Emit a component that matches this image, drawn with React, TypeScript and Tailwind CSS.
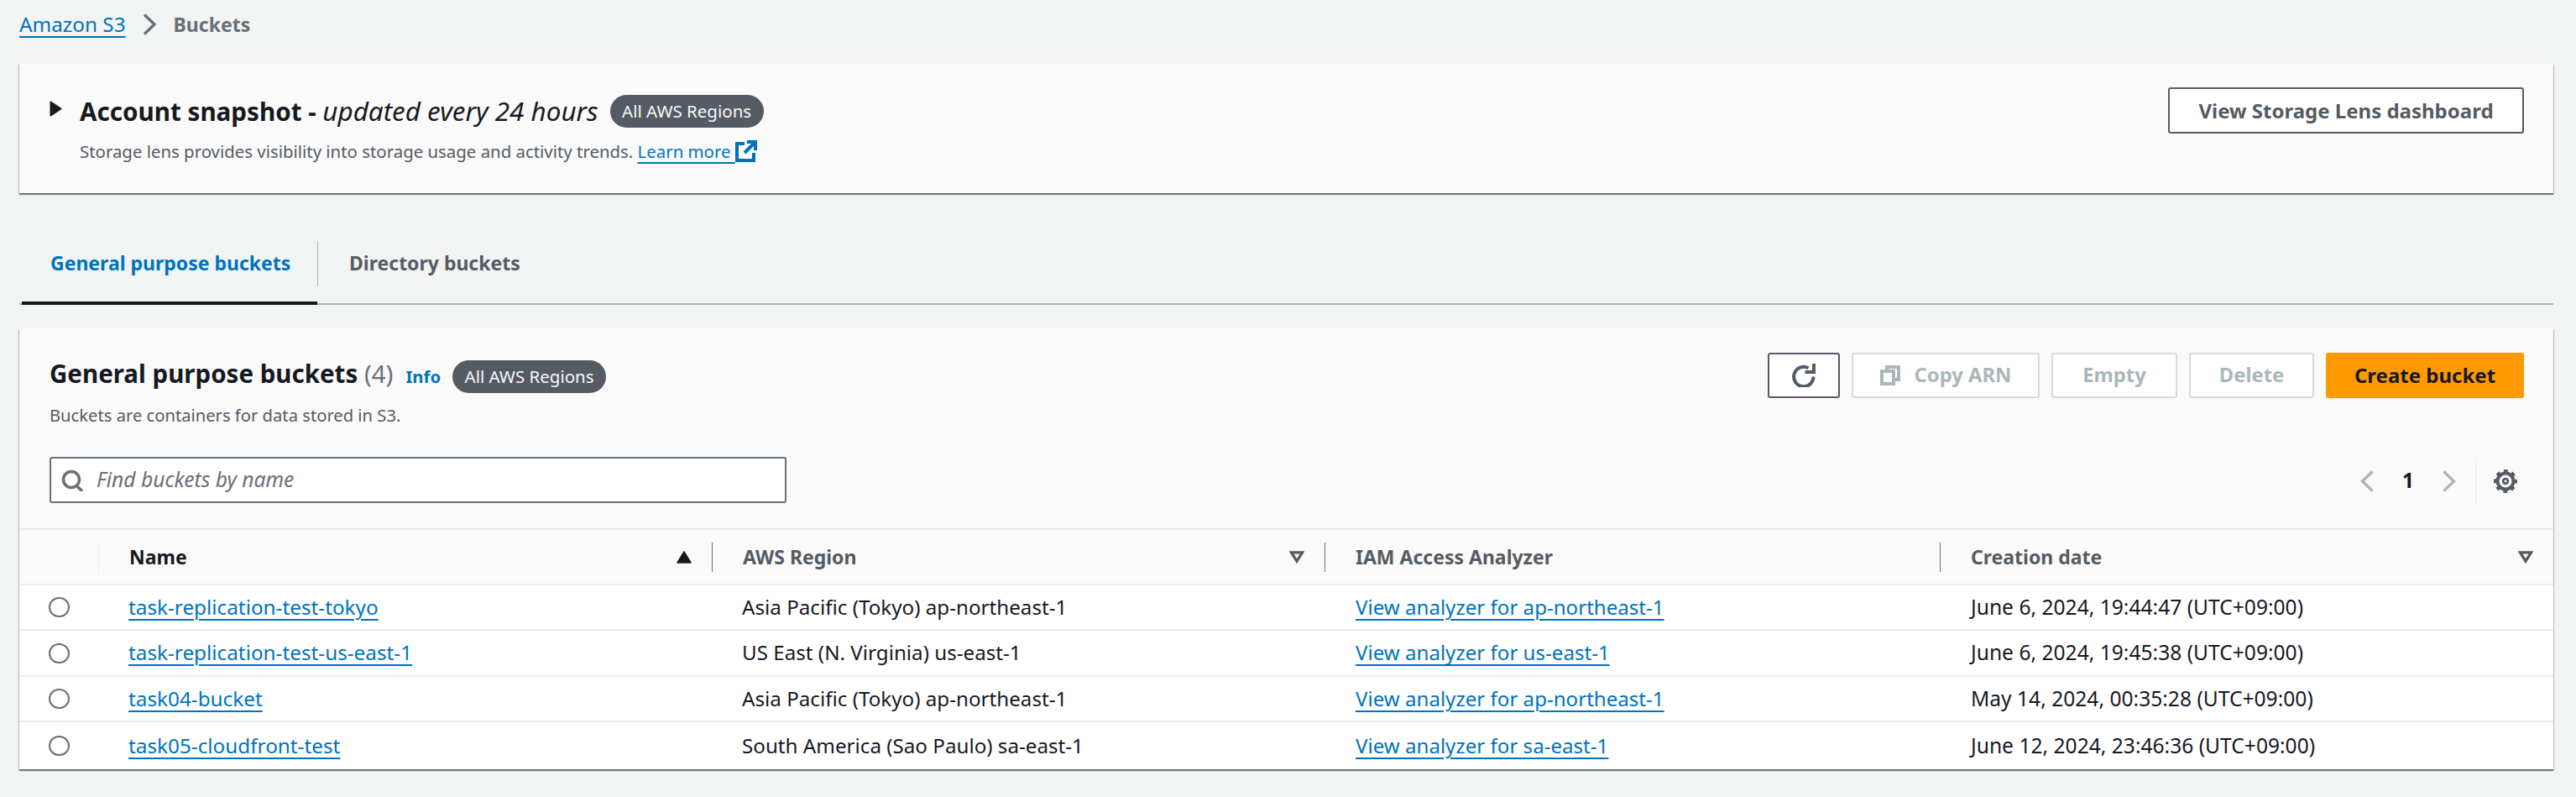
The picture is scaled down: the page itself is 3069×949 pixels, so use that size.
const rows = [
  { name: "task-replication-test-tokyo", region: "Asia Pacific (Tokyo) ap-northeast-1", analyzer: "View analyzer for ap-northeast-1", date: "June 6, 2024, 19:44:47 (UTC+09:00)", h: "h-[54px]" },
  { name: "task-replication-test-us-east-1", region: "US East (N. Virginia) us-east-1", analyzer: "View analyzer for us-east-1", date: "June 6, 2024, 19:45:38 (UTC+09:00)", h: "h-[55px]" },
  { name: "task04-bucket", region: "Asia Pacific (Tokyo) ap-northeast-1", analyzer: "View analyzer for ap-northeast-1", date: "May 14, 2024, 00:35:28 (UTC+09:00)", h: "h-[54px]" },
  { name: "task05-cloudfront-test", region: "South America (Sao Paulo) sa-east-1", analyzer: "View analyzer for sa-east-1", date: "June 12, 2024, 23:46:36 (UTC+09:00)", h: "h-[56px]" },
]

const cardShadow = "shadow-[0_2px_1px_0_rgba(0,28,36,0.45),1px_1px_1px_0_rgba(0,28,36,0.2),-1px_1px_1px_0_rgba(0,28,36,0.2)]"
const linkClass = "text-[#0073bb] underline decoration-2 underline-offset-[5px]"

function Chevron({ dir, className }: { dir: "left" | "right"; className: string }) {
  return (
    <svg viewBox="0 0 16 26" fill="none" stroke="currentColor" strokeWidth="3.4" className={className}>
      <path d={dir === "right" ? "M2 1.500 14 13 2 24.500" : "M14 1.500 2 13 14 24.500"} />
    </svg>
  )
}

function Badge() {
  return (
    <span className="inline-flex h-[39px] w-[183px] items-center justify-center rounded-[20px] bg-[#545b64] text-[20.5px] text-[#fafafa]">
      All AWS Regions
    </span>
  )
}

function Caret({ up, className }: { up?: boolean; className: string }) {
  if (up) {
    return (
      <svg viewBox="0 0 18 15" className={className}>
        <path d="M9 1 17 14H1Z" fill="#16191f" stroke="#16191f" strokeWidth="1.500" strokeLinejoin="round" />
      </svg>
    )
  }
  return (
    <svg viewBox="0 0 18 16" fill="none" stroke="#545b64" strokeWidth="3.500" className={className}>
      <path d="M2 2h14L9 13Z" />
    </svg>
  )
}

function HeaderCell({ label, active, up, sortable = true }: { label: string; active?: boolean; up?: boolean; sortable?: boolean }) {
  return (
    <div className="flex h-full w-full items-center justify-between pl-[36px] pr-[24px]">
      <span className={`text-[23px] font-bold ${active ? "text-[#16191f]" : "text-[#545b64]"}`}>{label}</span>
      {sortable && <Caret up={up} className="h-[15px] w-[18px]" />}
    </div>
  )
}

function Divider({ children }: { children: React.ReactNode }) {
  return <div className="flex h-[35px] items-center border-l border-[#687078]">{children}</div>
}

function ToolButton({ children, className }: { children: React.ReactNode; className: string }) {
  return (
    <button className={`flex h-[54px] items-center justify-center rounded-[3px] border-2 border-[#d5dbdb] bg-white text-[23.8px] font-bold text-[#aab7b8] ${className}`}>
      {children}
    </button>
  )
}

export default function App() {
  return (
    <div className="min-h-[949px] bg-[#f2f3f3] px-[23px] font-['Noto_Sans',sans-serif] text-[24.3px] text-[#16191f]">
      <nav className="flex h-[76px] items-start pt-[11px]">
        <a className={linkClass}>Amazon S3</a>
        <Chevron dir="right" className="ml-[20px] mt-[5px] h-[26px] w-[16px] text-[#687078]" />
        <span className="ml-[21px] text-[23px] font-bold leading-[36px] text-[#687078]">Buckets</span>
      </nav>

      <section className={`flex h-[154px] w-[3019px] items-start justify-between bg-[#fafafa] pl-[36px] pr-[35px] pt-[28px] ${cardShadow}`}>
        <div>
          <div className="flex h-[56px] items-center">
            <svg viewBox="0 0 15 19" className="h-[19px] w-[15px] -translate-y-[3px]">
              <path d="M1.500 1.500 13.500 9.500 1.500 17.500Z" fill="#16191f" stroke="#16191f" strokeWidth="2" strokeLinejoin="round" />
            </svg>
            <h2 className="ml-[21px] text-[29.6px] font-bold">Account snapshot - <em className="text-[31.4px] font-normal">updated every 24 hours</em></h2>
            <span className="ml-[14px]"><Badge /></span>
          </div>
          <p className="ml-[36px] mt-[5px] text-[20.4px] text-[#545b64]">
            Storage lens provides visibility into storage usage and activity trends.{" "}
            <a className={`${linkClass} inline-flex`}>
              <span>Learn more&nbsp;</span>
            </a>
            <svg viewBox="0 0 26 26" fill="none" stroke="#0073bb" strokeWidth="4" className="inline h-[26px] w-[26px] align-[-5px]">
              <path d="M11 4H2v20h20v-9M14 2h10v10M24 2 11 15" />
            </svg>
          </p>
        </div>
        <button className="h-[55px] w-[424px] rounded-[3px] border-2 border-[#545b64] bg-white text-[24px] font-bold text-[#545b64]">
          View Storage Lens dashboard
        </button>
      </section>

      <div className="mt-[57px] flex h-[76px] w-[3019px] items-start border-b-2 border-[#aab7b8]">
        <div className="ml-[3px] flex h-[76px] w-[352px] items-start border-b-[4px] border-[#16191f] pl-[34px] pt-[9px] text-[23px] font-bold text-[#0073bb]">
          General purpose buckets
        </div>
        <div className="h-[54px] border-l border-[#aab7b8] pl-[37px] pt-[9px] text-[23px] font-bold text-[#545b64]">
          Directory buckets
        </div>
      </div>

      <section className={`mt-[28px] w-[3019px] bg-[#fafafa] ${cardShadow}`}>
        <div className="flex h-[238px] justify-between pl-[36px] pr-[35px] pt-[29px]">
          <div>
            <div className="flex h-[50px] items-center">
              <h1 className="text-[29.5px] font-bold">General purpose buckets <span className="font-normal text-[#687078]">(4)</span></h1>
              <a className="ml-[15px] translate-y-[3px] text-[20.3px] font-bold text-[#0073bb]">Info</a>
              <span className="ml-[14px] translate-y-[3px]"><Badge /></span>
            </div>
            <p className="mt-[9px] text-[20.2px] text-[#545b64]">Buckets are containers for data stored in S3.</p>
            <div className="mt-[35px] flex h-[55px] w-[878px] items-center rounded-[3px] border-2 border-[#687078] bg-white pl-[12px]">
              <svg viewBox="0 0 26 26" fill="none" stroke="#687078" strokeWidth="3.500" className="h-[26px] w-[26px]">
                <circle cx="12" cy="12" r="9.500" />
                <path d="m18 19 7 7" />
              </svg>
              <span className="ml-[16px] text-[24.6px] italic text-[#687078]">Find buckets by name</span>
            </div>
          </div>
          <div className="flex flex-col items-end">
            <div className="flex gap-[14px]">
              <ToolButton className="w-[86px] !border-[#545b64]">
                <svg viewBox="0 0 28 28" fill="none" stroke="#545b64" strokeWidth="4" className="h-[28px] w-[28px]">
                  <path d="M25.500 15.500A11.700 11.700 0 1 1 19.500 5.300M26 0v10H15.500" />
                </svg>
              </ToolButton>
              <ToolButton className="w-[224px] gap-[17px]">
                <svg viewBox="0 0 24 24" fill="none" stroke="#aab7b8" strokeWidth="4" className="h-[24px] w-[24px]">
                  <path d="M8 5V2h14v15h-4M2 7h14v15H2Z" />
                </svg>
                Copy ARN
              </ToolButton>
              <ToolButton className="w-[150px]">Empty</ToolButton>
              <ToolButton className="w-[149px]">Delete</ToolButton>
              <button className="h-[54px] w-[236px] rounded-[3px] bg-[#ff9900] text-[24px] font-bold text-[#16191f]">Create bucket</button>
            </div>
            <div className="mt-[71px] flex h-[55px] items-center">
              <Chevron dir="left" className="h-[26px] w-[17px] text-[#aab7b8]" />
              <span className="ml-[33px] w-[12px] font-bold">1</span>
              <Chevron dir="right" className="ml-[35px] h-[26px] w-[17px] text-[#aab7b8]" />
              <div className="ml-[23px] h-[55px] border-l border-[#eaeded]" />
              <svg viewBox="0 0 28 28" fill="none" stroke="#545b64" className="ml-[21px] mr-[8px] h-[28px] w-[28px]">
                <circle cx="14" cy="14" r="9.500" strokeWidth="4" />
                <circle cx="14" cy="14" r="12" strokeWidth="4" strokeDasharray="4.710 4.710" strokeDashoffset="2.350" />
                <circle cx="14" cy="14" r="2.800" strokeWidth="2.800" />
              </svg>
            </div>
          </div>
        </div>

        <div className="grid h-[68px] grid-cols-[94px_731px_730px_733px_1fr] items-center border-y-2 border-[#eaeded]">
          <div />
          <div className="flex h-[35px] items-center border-l border-[#eaeded]">
            <HeaderCell label="Name" active up />
          </div>
          <Divider><HeaderCell label="AWS Region" /></Divider>
          <Divider><HeaderCell label="IAM Access Analyzer" sortable={false} /></Divider>
          <Divider><HeaderCell label="Creation date" /></Divider>
        </div>

        {rows.map((row, i) => (
          <div key={row.name} className={`grid grid-cols-[94px_731px_730px_733px_1fr] items-center bg-white ${row.h} ${i < rows.length - 1 ? "border-b-2 border-[#eaeded]" : ""}`}>
            <div className="pl-[35px]">
              <div className="h-[24px] w-[25px] rounded-full border-2 border-[#687078] bg-white" />
            </div>
            <div className="pl-[36px]"><a className={linkClass}>{row.name}</a></div>
            <div className="pl-[36px] text-[24.2px]">{row.region}</div>
            <div className="pl-[37px] text-[24.1px]"><a className={linkClass}>{row.analyzer}</a></div>
            <div className="pl-[37px] text-[24.6px]">{row.date}</div>
          </div>
        ))}
      </section>
    </div>
  )
}
